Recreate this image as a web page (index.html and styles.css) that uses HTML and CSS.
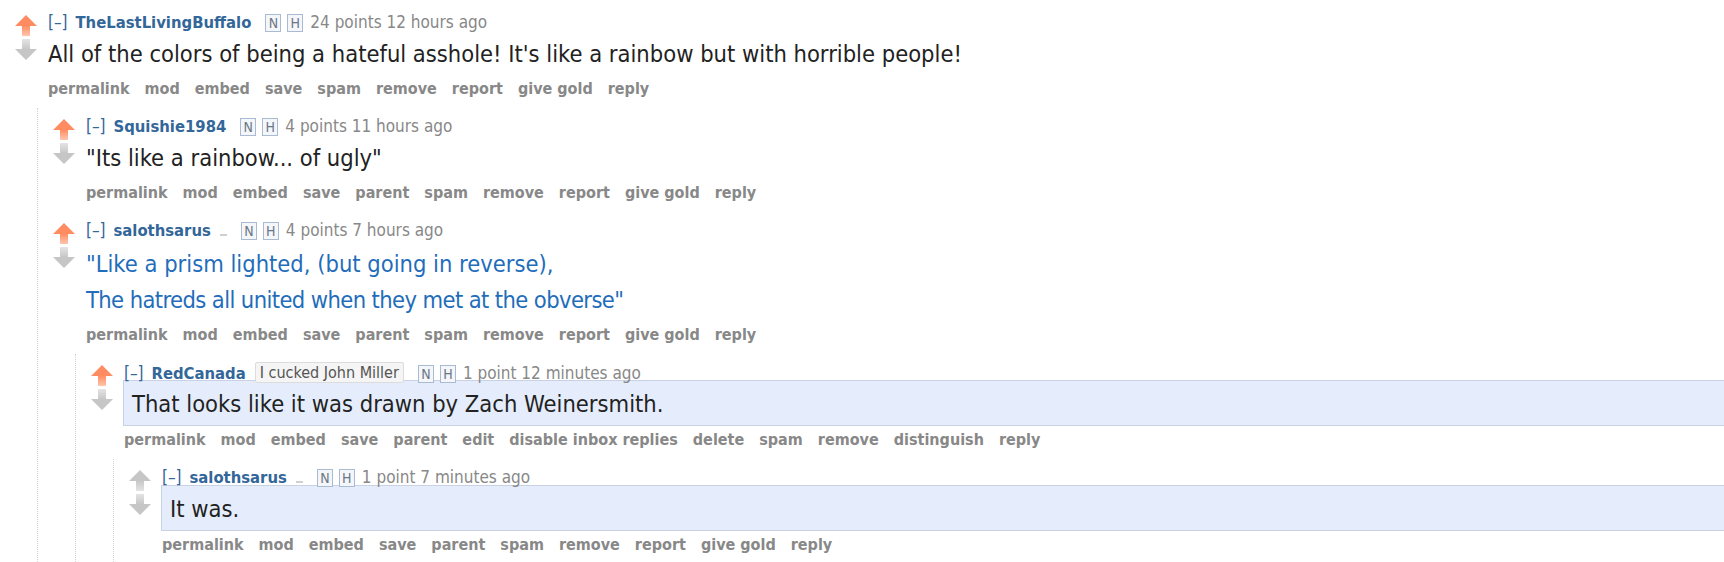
FILE: index.html
```html
<!DOCTYPE html>
<html lang="en">
<head>
    <meta charset="UTF-8">
    <title>comments</title>
    <link rel="stylesheet" href="styles.css">
</head>
<body>

<svg class="defs" width="0" height="0">
    <defs>
        <linearGradient id="up-orange" x1="0" y1="0" x2="0" y2="1">
            <stop offset="0.5" stop-color="#ff8b60"/>
            <stop offset="1" stop-color="#ffc6ad"/>
        </linearGradient>
        <linearGradient id="up-grey" x1="0" y1="0" x2="0" y2="1">
            <stop offset="0.5" stop-color="#c6c6c6"/>
            <stop offset="1" stop-color="#e4e4e4"/>
        </linearGradient>
        <linearGradient id="down-grey" x1="0" y1="0" x2="0" y2="1">
            <stop offset="0" stop-color="#e4e4e4"/>
            <stop offset="0.5" stop-color="#c6c6c6"/>
        </linearGradient>
    </defs>
</svg>

<div class="comment">
    <div class="midcol">
        <svg class="arrow" viewBox="0 0 22 21"><path d="M11 0 L22 11 L15 11 L15 21 L7 21 L7 11 L0 11 Z" fill="url(#up-orange)"/></svg>
        <svg class="arrow" viewBox="0 0 22 21"><path d="M7 0 L15 0 L15 10 L22 10 L11 21 L0 10 L7 10 Z" fill="url(#down-grey)"/></svg>
    </div>
    <div class="entry">
        <p class="tagline"><a class="expand">[–]</a> <a class="author">TheLastLivingBuffalo</a><span class="attrs"><span class="attr">N</span><span class="attr">H</span></span><span class="score">24 points</span> <time>12 hours ago</time></p>
        <div class="usertext-body"><div class="md"><p>All of the colors of being a hateful asshole! It's like a rainbow but with horrible people!</p></div></div>
        <ul class="buttons">
            <li>permalink</li><li>mod</li><li>embed</li><li>save</li><li>spam</li><li>remove</li><li>report</li><li>give gold</li><li>reply</li>
        </ul>
    </div>

    <div class="child">
        <div class="comment">
            <div class="midcol">
                <svg class="arrow" viewBox="0 0 22 21"><path d="M11 0 L22 11 L15 11 L15 21 L7 21 L7 11 L0 11 Z" fill="url(#up-orange)"/></svg>
                <svg class="arrow" viewBox="0 0 22 21"><path d="M7 0 L15 0 L15 10 L22 10 L11 21 L0 10 L7 10 Z" fill="url(#down-grey)"/></svg>
            </div>
            <div class="entry">
                <p class="tagline"><a class="expand">[–]</a> <a class="author">Squishie1984</a><span class="attrs"><span class="attr">N</span><span class="attr">H</span></span><span class="score">4 points</span> <time>11 hours ago</time></p>
                <div class="usertext-body"><div class="md"><p>"Its like a rainbow... of ugly"</p></div></div>
                <ul class="buttons">
                    <li>permalink</li><li>mod</li><li>embed</li><li>save</li><li>parent</li><li>spam</li><li>remove</li><li>report</li><li>give gold</li><li>reply</li>
                </ul>
            </div>
        </div>

        <div class="comment">
            <div class="midcol">
                <svg class="arrow" viewBox="0 0 22 21"><path d="M11 0 L22 11 L15 11 L15 21 L7 21 L7 11 L0 11 Z" fill="url(#up-orange)"/></svg>
                <svg class="arrow" viewBox="0 0 22 21"><path d="M7 0 L15 0 L15 10 L22 10 L11 21 L0 10 L7 10 Z" fill="url(#down-grey)"/></svg>
            </div>
            <div class="entry">
                <p class="tagline"><a class="expand">[–]</a> <a class="author">salothsarus</a><span class="dash"></span><span class="attrs"><span class="attr">N</span><span class="attr">H</span></span><span class="score">4 points</span> <time>7 hours ago</time></p>
                <div class="usertext-body"><div class="md verse"><p>"Like a prism lighted, (but going in reverse),</p><p class="tight">The hatreds all united when they met at the obverse"</p></div></div>
                <ul class="buttons">
                    <li>permalink</li><li>mod</li><li>embed</li><li>save</li><li>parent</li><li>spam</li><li>remove</li><li>report</li><li>give gold</li><li>reply</li>
                </ul>
            </div>

            <div class="child">
                <div class="comment">
                    <div class="midcol">
                        <svg class="arrow" viewBox="0 0 22 21"><path d="M11 0 L22 11 L15 11 L15 21 L7 21 L7 11 L0 11 Z" fill="url(#up-orange)"/></svg>
                        <svg class="arrow" viewBox="0 0 22 21"><path d="M7 0 L15 0 L15 10 L22 10 L11 21 L0 10 L7 10 Z" fill="url(#down-grey)"/></svg>
                    </div>
                    <div class="entry">
                        <p class="tagline"><a class="expand">[–]</a> <a class="author">RedCanada</a><span class="flair">I cucked John Miller</span><span class="attrs"><span class="attr">N</span><span class="attr">H</span></span><span class="score">1 point</span> <time>12 minutes ago</time></p>
                        <div class="usertext-body new"><div class="md"><p>That looks like it was drawn by Zach Weinersmith.</p></div></div>
                        <ul class="buttons">
                            <li>permalink</li><li>mod</li><li>embed</li><li>save</li><li>parent</li><li>edit</li><li>disable inbox replies</li><li>delete</li><li>spam</li><li>remove</li><li>distinguish</li><li>reply</li>
                        </ul>
                    </div>

                    <div class="child">
                        <div class="comment">
                            <div class="midcol">
                                <svg class="arrow" viewBox="0 0 22 21"><path d="M11 0 L22 11 L15 11 L15 21 L7 21 L7 11 L0 11 Z" fill="url(#up-grey)"/></svg>
                                <svg class="arrow" viewBox="0 0 22 21"><path d="M7 0 L15 0 L15 10 L22 10 L11 21 L0 10 L7 10 Z" fill="url(#down-grey)"/></svg>
                            </div>
                            <div class="entry">
                                <p class="tagline"><a class="expand">[–]</a> <a class="author">salothsarus</a><span class="dash"></span><span class="attrs"><span class="attr">N</span><span class="attr">H</span></span><span class="score">1 point</span> <time>7 minutes ago</time></p>
                                <div class="usertext-body new"><div class="md"><p>It was.</p></div></div>
                                <ul class="buttons">
                                    <li>permalink</li><li>mod</li><li>embed</li><li>save</li><li>parent</li><li>spam</li><li>remove</li><li>report</li><li>give gold</li><li>reply</li>
                                </ul>
                            </div>
                        </div>
                    </div>
                </div>
            </div>
        </div>
    </div>
</div>

</body>
</html>
```

FILE: styles.css
```css
body {
    margin: 0;
    padding-top: 4px;
    background-color: #fff;
    font-family: "DejaVu Sans Condensed", "Liberation Sans", sans-serif;
    overflow: hidden;
}
.defs {
    display: block;
}
.comment {
    display: grid;
    grid-template-columns: 48px 1fr;
    padding: 8px 0;
}
.midcol {
    display: flex;
    flex-direction: column;
    gap: 3px;
    padding: 3px 0 0 15px;
}
.arrow {
    display: block;
    width: 22px;
    height: 21px;
}
.entry {
    min-width: 0;
}
.tagline {
    margin: 0;
    height: 20px;
    font-size: 17px;
    line-height: 20px;
    color: #888;
    white-space: nowrap;
}
.tagline .expand {
    color: #369;
    margin-right: 3px;
}
.tagline .author {
    color: #369;
    font-size: 16.5px;
    font-weight: bold;
}
.tagline .dash {
    display: inline-block;
    width: 7px;
    height: 2px;
    margin-left: 9px;
    background-color: #d0d0d0;
}
.tagline .flair {
    display: inline-block;
    margin-left: 9px;
    padding: 0 4px;
    font-size: 16px;
    line-height: 19px;
    vertical-align: text-bottom;
    color: #545454;
    background-color: #f5f5f5;
    border: 1px solid #dcdcdc;
    border-radius: 2px;
}
.tagline .attrs {
    margin-left: 14px;
}
.tagline .attr {
    display: inline-block;
    width: 14px;
    height: 16px;
    margin-right: 6px;
    font-size: 14px;
    line-height: 16px;
    text-align: center;
    vertical-align: text-bottom;
    color: #6b7686;
    background-color: #f4f6fa;
    border: 1px solid #a9bbd2;
}
.tagline .attr + .attr {
    margin-right: 7px;
}
.usertext-body {
    margin: -1px 0 0 -1px;
    padding: 6px 0 4px;
    border: 1px solid transparent;
}
.usertext-body.new {
    margin-top: -2px;
    margin-right: -20px;
    padding: 7px 0 5px 8px;
    background-color: #e5edfc;
    border-color: #c8d2e4;
}
.md {
    font-size: 23.5px;
    line-height: 32px;
    color: #222;
}
.md p {
    margin: 0;
}
.md p + p {
    margin-top: 4px;
}
.md.verse {
    padding-top: 2px;
    color: #1f6dbb;
}
.md .tight {
    letter-spacing: -0.6px;
}
.buttons {
    display: flex;
    gap: 15px;
    height: 22px;
    margin: 3px 0 0;
    padding: 0;
    list-style: none;
    font-size: 16px;
    line-height: 22px;
    font-weight: bold;
    color: #888;
    white-space: nowrap;
}
.child {
    grid-column: 1 / -1;
    margin: 8px 0 -8px 37px;
    border-left: 1px dotted #cfd0d8;
}
```
